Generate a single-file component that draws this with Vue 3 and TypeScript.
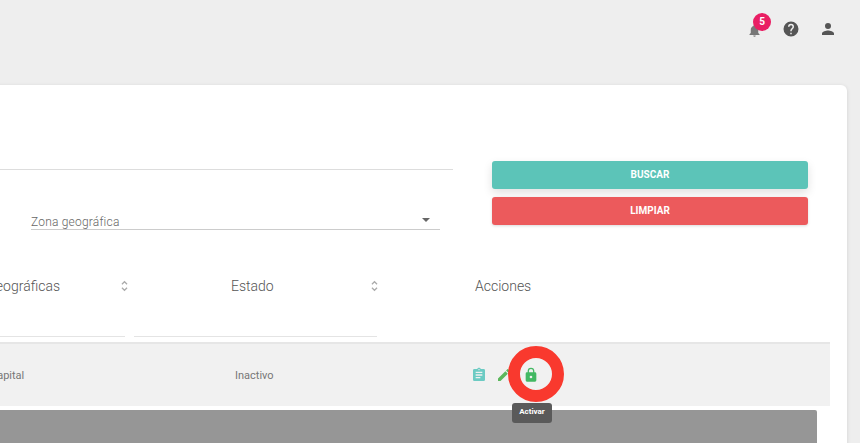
<template>
  <div class="page">
    <header class="topbar">
      <div class="top-icon bell">
        <svg viewBox="0 0 24 24" width="15" height="15"><path d="M12 22a2 2 0 0 0 2-2h-4a2 2 0 0 0 2 2zm6-6v-5c0-3.07-1.63-5.64-4.5-6.32V4a1.5 1.5 0 0 0-3 0v.68C7.64 5.36 6 7.92 6 11v5l-2 2v1h16v-1l-2-2z" /></svg>
        <span class="badge">5</span>
      </div>
      <div class="top-icon">
        <svg viewBox="0 0 24 24" width="18" height="18"><path d="M12 2a10 10 0 1 0 0 20 10 10 0 0 0 0-20zm1 17h-2v-2h2v2zm2.07-7.75-.9.92C13.45 12.9 13 13.5 13 15h-2v-.5c0-1.1.45-2.1 1.17-2.83l1.24-1.26A1.99 1.99 0 0 0 12 7a2 2 0 0 0-2 2H8a4 4 0 1 1 8 0c0 .88-.36 1.68-.93 2.25z" /></svg>
      </div>
      <div class="top-icon">
        <svg viewBox="0 0 24 24" width="18" height="18"><path d="M12 12a4 4 0 1 0 0-8 4 4 0 0 0 0 8zm0 2c-2.67 0-8 1.34-8 4v2h16v-2c0-2.66-5.33-4-8-4z" /></svg>
      </div>
    </header>

    <main class="card">
      <section class="filters">
        <div class="fields">
          <div class="search-line"></div>
          <div class="select">
            <span>Zona geográfica</span>
            <i class="caret"></i>
          </div>
        </div>
        <div class="buttons">
          <button class="btn teal">BUSCAR</button>
          <button class="btn red">LIMPIAR</button>
        </div>
      </section>

      <section class="table">
        <div class="head">
          <div class="cell first">
            <span class="clip">Zonas geográficas</span>
            <svg class="sort" viewBox="0 0 8 14" width="7" height="12"><path d="M1 5l3-3 3 3M1 9l3 3 3-3" /></svg>
          </div>
          <div class="cell state">
            <span>Estado</span>
            <svg class="sort" viewBox="0 0 8 14" width="7" height="12"><path d="M1 5l3-3 3 3M1 9l3 3 3-3" /></svg>
          </div>
          <div class="cell actions-head">Acciones</div>
        </div>
        <div class="head-lines">
          <div class="line first-line"></div>
          <div class="line state-line"></div>
        </div>
        <div class="row">
          <div class="val first-val">Capital</div>
          <div class="val state-val">Inactivo</div>
          <div class="actions">
            <svg class="act" viewBox="0 0 24 24" width="16" height="16" fill="#6ccbc3"><path d="M19 3h-4.18C14.4 1.84 13.3 1 12 1s-2.4.84-2.82 2H5a2 2 0 0 0-2 2v14a2 2 0 0 0 2 2h14a2 2 0 0 0 2-2V5a2 2 0 0 0-2-2zm-7 0a1 1 0 1 1 0 2 1 1 0 0 1 0-2zm2 14H7v-2h7v2zm3-4H7v-2h10v2zm0-4H7V7h10v2z" /></svg>
            <svg class="act pencil" viewBox="0 0 24 24" width="16" height="16" fill="#5cb85c"><path d="M3 17.25V21h3.75L17.81 9.94l-3.75-3.75L3 17.25zM20.71 7.04a1 1 0 0 0 0-1.41l-2.34-2.34a1 1 0 0 0-1.41 0l-1.83 1.83 3.75 3.75 1.83-1.83z" /></svg>
            <span class="lock-wrap">
              <svg viewBox="0 0 24 24" width="16" height="16" fill="#43b863"><path d="M18 8h-1V6A5 5 0 0 0 7 6v2H6a2 2 0 0 0-2 2v10a2 2 0 0 0 2 2h12a2 2 0 0 0 2-2V10a2 2 0 0 0-2-2zm-6 9a2 2 0 1 1 0-4 2 2 0 0 1 0 4zm3.1-9H8.9V6a3.1 3.1 0 0 1 6.2 0v2z" /></svg>
              <span class="tooltip">Activar</span>
            </span>
          </div>
        </div>
        <div class="gray-bar"></div>
      </section>
    </main>
  </div>
</template>

<script setup lang="ts">
</script>

<style>
html, body {
  margin: 0;
  background: #eeeeee;
  overflow: hidden;
}
</style>

<style scoped>
.page {
  width: 860px;
  height: 443px;
  overflow: hidden;
  font-family: Roboto, "Liberation Sans", sans-serif;
  color: #666;
}

.topbar {
  height: 85px;
  box-sizing: border-box;
  display: flex;
  justify-content: flex-end;
  align-items: flex-start;
  gap: 17px;
  padding: 20px 22px 0 0;
}

.top-icon {
  width: 20px;
  height: 18px;
  display: flex;
  justify-content: center;
  align-items: center;
}

.top-icon svg {
  fill: #555;
}

.bell {
  position: relative;
}

.bell svg {
  fill: #777;
  margin-top: 3px;
}

.badge {
  position: absolute;
  left: 9px;
  top: -7px;
  width: 18px;
  height: 18px;
  border-radius: 50%;
  background: #e91e63;
  color: #fff;
  font-size: 10px;
  font-weight: 700;
  line-height: 18px;
  text-align: center;
}

.card {
  width: 857px;
  height: 400px;
  margin-left: -10px;
  background: #fff;
  border-radius: 6px;
  box-shadow: 0 1px 4px rgba(0, 0, 0, 0.12);
}

.filters {
  display: flex;
  padding-top: 76px;
  height: 107px;
}

.fields {
  width: 463px;
}

.search-line {
  height: 8px;
  border-bottom: 1px solid #ddd;
}

.select {
  height: 34px;
  margin: 26px 13px 0 41px;
  padding: 0 10px 0 0;
  box-sizing: border-box;
  display: flex;
  align-items: flex-end;
  justify-content: space-between;
  border-bottom: 1px solid #ccc;
  font-size: 12px;
  font-weight: 300;
  letter-spacing: 0.2px;
  line-height: 14px;
  color: #666;
}

.caret {
  width: 0;
  height: 0;
  margin-bottom: 7px;
  border-left: 4px solid transparent;
  border-right: 4px solid transparent;
  border-top: 4px solid #666;
}

.buttons {
  width: 316px;
  margin-left: 39px;
  display: flex;
  flex-direction: column;
  gap: 8px;
}

.btn {
  height: 28px;
  padding: 0 0 2px;
  border: none;
  border-radius: 3px;
  color: #fff;
  font-family: inherit;
  font-size: 10px;
  font-weight: 700;
}

.teal {
  background: #5cc4b8;
  box-shadow: 0 4px 10px rgba(0, 0, 0, 0.12);
}

.red {
  background: #ec5a5c;
  box-shadow: 0 1px 3px rgba(0, 0, 0, 0.15);
}

.head {
  display: flex;
  height: 36px;
  padding-top: 9px;
  box-sizing: border-box;
  font-size: 14px;
  font-weight: 300;
  color: #555;
}

.cell {
  display: flex;
  align-items: center;
  height: 18px;
}

.first {
  width: 144px;
  justify-content: flex-end;
  padding-right: 6px;
  box-sizing: border-box;
}

.clip {
  white-space: nowrap;
  margin-right: 61px;
  margin-left: -100px;
}

.state {
  width: 242px;
  box-sizing: border-box;
}

.state span {
  margin-left: 97px;
  margin-right: 97px;
}

.actions-head {
  margin-left: 99px;
}

.sort {
  fill: none;
  stroke: #aaa;
  stroke-width: 1.4;
  flex: none;
}

.head-lines {
  display: flex;
  height: 38px;
  padding-top: 32px;
  box-sizing: border-box;
}

.line {
  height: 1px;
  background: #e4e4e4;
}

.first-line {
  width: 135px;
}

.state-line {
  width: 243px;
  margin-left: 9px;
}

.row {
  width: 840px;
  height: 64px;
  box-sizing: border-box;
  display: flex;
  align-items: center;
  background: #f1f1f1;
  border-top: 2px solid #e6e6e6;
  font-size: 11px;
  color: #777;
}

.first-val {
  width: 34px;
  text-align: right;
}

.state-val {
  margin-left: 211px;
  width: 236px;
}

.actions {
  display: flex;
  align-items: center;
}

.act {
  flex: none;
}

.pencil {
  margin-left: 9px;
}

.lock-wrap {
  position: relative;
  display: block;
  width: 16px;
  height: 16px;
  margin-left: 11px;
}

.lock-wrap::before {
  content: "";
  position: absolute;
  left: -15px;
  top: -21px;
  width: 56px;
  height: 56px;
  box-sizing: border-box;
  border: 12px solid #f9392e;
  border-radius: 50%;
}

.lock-wrap svg {
  display: block;
}

.tooltip {
  position: absolute;
  left: -11px;
  top: 36px;
  width: 40px;
  height: 20px;
  background: #5a5a5a;
  color: #fff;
  border-radius: 3px;
  font-size: 8px;
  font-weight: 700;
  line-height: 18px;
  text-align: center;
}

.gray-bar {
  width: 827px;
  height: 40px;
  margin-top: 4px;
  background: #969696;
  border-radius: 2px;
}
</style>
